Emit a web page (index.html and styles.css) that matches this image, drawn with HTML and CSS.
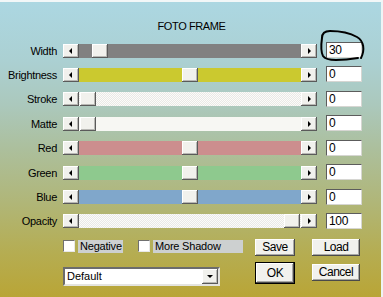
FILE: index.html
```html
<!DOCTYPE html>
<html>
<head>
<meta charset="utf-8">
<link rel="stylesheet" href="styles.css">
</head>
<body>
<div class="dialog">
  <div class="title">FOTO FRAME</div>
  <div class="rows">
    <div class="row"><span class="label">Width</span><div class="slider"><span class="arrow arrow-l"></span><div class="track t-width"><span class="thumb" style="margin-left:13px"></span></div><span class="arrow arrow-r"></span></div><span class="field">30</span></div>
    <div class="row"><span class="label">Brightness</span><div class="slider"><span class="arrow arrow-l"></span><div class="track t-bright"><span class="thumb" style="margin-left:103px"></span></div><span class="arrow arrow-r"></span></div><span class="field">0</span></div>
    <div class="row"><span class="label">Stroke</span><div class="slider"><span class="arrow arrow-l"></span><div class="track t-dither"><span class="thumb" style="margin-left:1px"></span></div><span class="arrow arrow-r"></span></div><span class="field">0</span></div>
    <div class="row"><span class="label">Matte</span><div class="slider"><span class="arrow arrow-l"></span><div class="track t-matte"><span class="thumb" style="margin-left:1px"></span></div><span class="arrow arrow-r"></span></div><span class="field">0</span></div>
    <div class="row"><span class="label">Red</span><div class="slider"><span class="arrow arrow-l"></span><div class="track t-red"><span class="thumb" style="margin-left:103px"></span></div><span class="arrow arrow-r"></span></div><span class="field">0</span></div>
    <div class="row"><span class="label">Green</span><div class="slider"><span class="arrow arrow-l"></span><div class="track t-green"><span class="thumb" style="margin-left:103px"></span></div><span class="arrow arrow-r"></span></div><span class="field">0</span></div>
    <div class="row"><span class="label">Blue</span><div class="slider"><span class="arrow arrow-l"></span><div class="track t-blue"><span class="thumb" style="margin-left:103px"></span></div><span class="arrow arrow-r"></span></div><span class="field">0</span></div>
    <div class="row"><span class="label">Opacity</span><div class="slider"><span class="arrow arrow-l"></span><div class="track t-dither"><span class="thumb" style="margin-left:205px"></span></div><span class="arrow arrow-r"></span></div><span class="field">100</span></div>
  </div>
  <div class="bottom">
    <div class="options">
      <div class="checks">
        <span class="box"></span><span class="clabel neg">Negative</span>
        <span class="box box2"></span><span class="clabel shadow">More Shadow</span>
      </div>
      <div class="select"><span class="seltext">Default</span><span class="drop"><span class="down"></span></span></div>
    </div>
    <div class="buttons">
      <span class="btn">Save</span>
      <span class="btn">Load</span>
      <span class="btn ok">OK</span>
      <span class="btn">Cancel</span>
    </div>
  </div>
  <svg class="circle" width="383" height="297" viewBox="0 0 383 297">
    <path d="M361 58 C365 50 364 41 357 37 C350 33 340 31 330 31 C325 31 322 33 322 38 C321 45 321 52 323 56 C325 59 330 60 336 60 C344 60 352 59 358 58" fill="none" stroke="#000" stroke-width="2" stroke-linecap="round"/>
  </svg>
</div>
</body>
</html>
```

FILE: styles.css
```css
html, body {
  margin: 0;
  padding: 0;
}
body {
  font-family: "Liberation Sans", Arial, sans-serif;
  font-size: 11px;
  color: #000;
}
.dialog {
  position: relative;
  width: 383px;
  height: 297px;
  box-sizing: border-box;
  border-top: 2px solid #f2f7f8;
  border-right: 2px solid #eef4f5;
  background: linear-gradient(180deg, #acd7e2 0%, #abd0d2 20%, #abc8bc 35%, #acbf9c 50%, #b0b678 68%, #b5ad52 85%, #b9a536 100%);
  overflow: hidden;
}
.title {
  padding-top: 18px;
  height: 13px;
  line-height: 13px;
  text-align: center;
  letter-spacing: -0.4px;
  padding-left: 2px;
  margin-bottom: 9px;
}
.rows {
  display: flex;
  flex-direction: column;
  gap: 8.43px;
}
.row {
  display: flex;
  align-items: center;
  height: 16px;
}
.label {
  width: 57px;
  text-align: right;
  margin-right: 6px;
  line-height: 16px;
  padding-top: 1px;
  letter-spacing: -0.3px;
}
.slider {
  display: flex;
  width: 254px;
  height: 14px;
  margin-top: 1px;
}
.arrow, .thumb {
  display: flex;
  align-items: center;
  justify-content: center;
  width: 16px;
  height: 14px;
  box-sizing: border-box;
  background: #f1f1ed;
  box-shadow: inset -1px -1px #5a5a5a, inset 1px 1px #ffffff, inset -2px -2px #b8b8b4;
  flex: none;
}
.arrow-l::before {
  content: "";
  border-right: 3px solid #000;
  border-top: 3px solid transparent;
  border-bottom: 3px solid transparent;
  margin-right: 1px;
}
.arrow-r::before {
  content: "";
  border-left: 3px solid #000;
  border-top: 3px solid transparent;
  border-bottom: 3px solid transparent;
  margin-left: 1px;
}
.track {
  flex: 1;
  display: flex;
  min-width: 0;
}
.t-width { background: #818181; }
.t-bright { background: #cbc92f; }
.t-red { background: #cc8e8e; }
.t-green { background: #8ec98e; }
.t-blue { background: #80a7cb; }
.t-matte { background: #f7f7f3; }
.t-dither {
  background: repeating-conic-gradient(#fbfbf9 0 25%, #e9e9e6 0 50%) 0 0 / 2px 2px;
}
.field {
  margin-left: 9px;
  width: 36px;
  height: 16px;
  box-sizing: border-box;
  background: #fff;
  border: 1px solid;
  border-color: #5c5c5c #d6d6d2 #d6d6d2 #5c5c5c;
  font-size: 12px;
  line-height: 14px;
  padding-left: 2px;
  letter-spacing: -0.3px;
}
.bottom {
  display: flex;
  margin-top: 10px;
  padding-left: 63px;
}
.options {
  width: 192px;
  padding-top: 1px;
}
.checks {
  display: flex;
  align-items: center;
  height: 13px;
}
.box {
  width: 12px;
  height: 12px;
  box-sizing: border-box;
  background: #fff;
  border: 1px solid;
  border-color: #707070 #e8e8e8 #e8e8e8 #707070;
  margin-right: 3px;
}
.box2 {
  margin-left: 15px;
}
.clabel {
  height: 13px;
  line-height: 13px;
  background: #cdd0d0;
  padding-left: 2px;
  box-sizing: border-box;
  letter-spacing: -0.2px;
}
.neg { width: 45px; }
.shadow { width: 90px; }
.select {
  margin-top: 14px;
  width: 157px;
  height: 19px;
  box-sizing: border-box;
  background: #fff;
  border: 2px solid;
  border-color: #6c6c6c #e4e4e0 #e4e4e0 #6c6c6c;
  display: flex;
  align-items: center;
  justify-content: space-between;
}
.seltext {
  padding-left: 2px;
  font-size: 11px;
}
.drop {
  width: 16px;
  height: 15px;
  box-sizing: border-box;
  background: #f1f1ed;
  box-shadow: inset -1px -1px #5a5a5a, inset 1px 1px #ffffff, inset -2px -2px #b8b8b4;
  display: flex;
  align-items: center;
  justify-content: center;
}
.down {
  border-top: 3px solid #000;
  border-left: 3px solid transparent;
  border-right: 3px solid transparent;
  margin-top: 1px;
}
.buttons {
  display: grid;
  grid-template-columns: 40px 48px;
  column-gap: 17px;
  row-gap: 6px;
  align-items: center;
  align-content: start;
}
.btn {
  height: 17px;
  box-sizing: border-box;
  background: #f1f1ed;
  box-shadow: inset -1px -1px #4a4a4a, inset 1px 1px #ffffff, inset -2px -2px #a8a8a4;
  font-size: 12px;
  line-height: 17px;
  text-align: center;
  letter-spacing: -0.5px;
}
.btn.ok {
  height: 22px;
  line-height: 20px;
  border: 1px solid #000;
}
.circle {
  position: absolute;
  left: 0;
  top: -2px;
  pointer-events: none;
}
```
